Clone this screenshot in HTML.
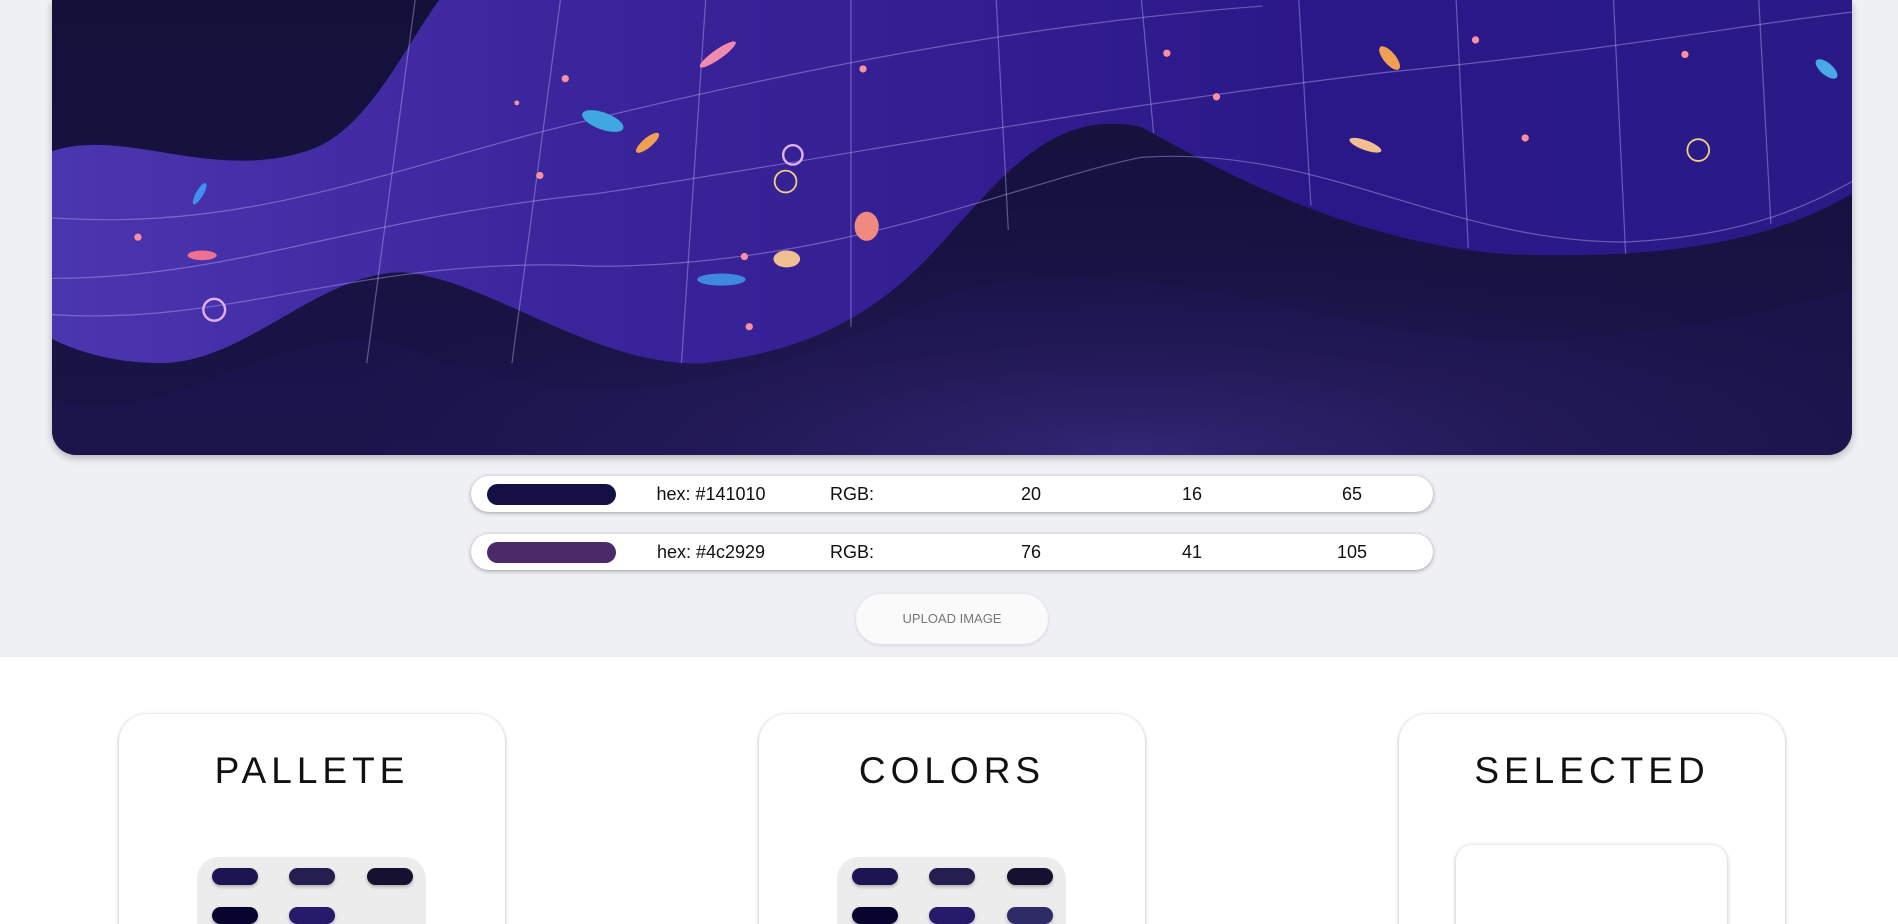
<!DOCTYPE html>
<html><head><meta charset="utf-8"><style>
*{margin:0;padding:0;box-sizing:border-box}
html,body{width:1898px;height:924px;overflow:hidden;background:#fff;font-family:"Liberation Sans",sans-serif}
#w{position:relative;width:1898px;height:924px;overflow:hidden}
.top{position:absolute;left:0;top:0;width:1898px;height:657px;background:#eff0f4}
.hero{position:absolute;left:52px;top:0;width:1800px;height:455px;border-radius:0 0 24px 24px;overflow:hidden;box-shadow:0 3px 8px rgba(0,0,0,.25)}
.row{position:absolute;left:471px;width:962px;height:36px;background:#fff;border-radius:18px;box-shadow:0 1px 4px rgba(0,0,0,.35)}
.row .sw{position:absolute;left:16px;top:8px;width:129px;height:21px;border-radius:11px}
.row span{position:absolute;top:8px;font-size:18px;color:#111;transform:translateX(-50%);white-space:nowrap}
.btn{position:absolute;left:856px;top:594px;width:192px;height:50px;border-radius:25px;background:#fafafa;box-shadow:0 1px 4px rgba(0,0,0,.12);font-size:13px;color:#777;text-align:center;line-height:50px}
.card{position:absolute;top:714px;width:386px;height:260px;border-radius:28px 28px 0 0;background:#fff;box-shadow:0 1px 4px rgba(0,0,0,.3)}
.card h2{position:absolute;top:36px;width:100%;text-align:center;font-weight:normal;font-size:37px;letter-spacing:5px;color:#111}
.grid{position:absolute;left:78px;top:143px;width:229px;height:120px;background:#ececec;border-radius:22px 22px 0 0}
.d{position:absolute;width:46px;height:17px;border-radius:9px;box-shadow:0 2px 3px rgba(0,0,0,.25)}
.sel{position:absolute;left:57px;top:131px;width:271px;height:130px;border-radius:16px 16px 0 0;background:#fff;box-shadow:0 1px 4px rgba(0,0,0,.3)}
</style></head><body><div id="w">
<div class="top"></div>
<div class="hero">
<svg width="1800" height="455" viewBox="0 0 1487 376" preserveAspectRatio="none">
<defs>
<linearGradient id="bg" x1="0" y1="0" x2="0" y2="1"><stop offset="0" stop-color="#13113a"/><stop offset="1" stop-color="#1a1448"/></linearGradient>
<radialGradient id="glow" cx="0.6" cy="1" r="0.5"><stop offset="0" stop-color="#3a2a80" stop-opacity=".8"/><stop offset="1" stop-color="#1a1448" stop-opacity="0"/></radialGradient>
<linearGradient id="band" x1="0" y1="0" x2="1" y2="0"><stop offset="0" stop-color="#4b36b0"/><stop offset=".3" stop-color="#3a249a"/><stop offset=".7" stop-color="#2b1888"/><stop offset="1" stop-color="#2a1a88"/></linearGradient>
</defs>
<rect width="1487" height="376" fill="url(#bg)"/>
<path d="M0 330 C100 360 200 250 300 290 C420 340 560 330 700 260 C820 200 950 240 1100 270 C1250 300 1400 260 1487 240 L1487 376 L0 376Z" fill="#1c1650" opacity=".6"/>
<rect width="1487" height="376" fill="url(#glow)"/>
<path d="M0 125 C60 105 130 150 210 125 C260 110 290 40 320 0 L1487 0 L1487 160 C1420 200 1330 215 1200 210 C1080 200 980 150 900 105 C830 90 790 140 740 195 C680 265 620 290 540 300 C450 305 360 230 290 225 C220 225 160 300 90 300 C50 300 20 290 0 280Z" fill="url(#band)"/>
<g fill="none" stroke="#b9a8f0" stroke-opacity=".45" stroke-width="1">
<path d="M0 180 C150 190 250 150 400 110 C600 60 800 20 1000 5"/>
<path d="M0 230 C150 230 250 180 450 160 C650 130 850 90 1100 60 C1300 40 1400 20 1487 10"/>
<path d="M0 260 C150 270 260 210 450 220 C650 220 800 150 900 130 C1050 120 1150 200 1300 200 C1400 195 1450 170 1487 150"/>
<path d="M300 0 L260 300 M420 0 L380 300 M540 0 L520 300 M660 0 L660 270 M780 0 L790 190 M900 0 L910 110 M1030 0 L1040 170 M1160 0 L1170 205 M1290 0 L1300 210 M1410 0 L1420 185"/>
</g>
<g>
<ellipse cx="550" cy="45" rx="18" ry="4" fill="#f08ab0" transform="rotate(-35 550 45)"/>
<ellipse cx="455" cy="100" rx="18" ry="7" fill="#3fa8e0" transform="rotate(20 455 100)"/>
<ellipse cx="492" cy="118" rx="12" ry="4" fill="#f0a050" transform="rotate(-40 492 118)"/>
<ellipse cx="1105" cy="48" rx="12" ry="5" fill="#f0a050" transform="rotate(50 1105 48)"/>
<ellipse cx="1466" cy="57" rx="11" ry="5" fill="#4aa8e8" transform="rotate(40 1466 57)"/>
<ellipse cx="1085" cy="120" rx="14" ry="4" fill="#f0c090" transform="rotate(20 1085 120)"/>
<ellipse cx="673" cy="187" rx="10" ry="12" fill="#f08a80"/>
<ellipse cx="607" cy="214" rx="11" ry="7" fill="#f0c090"/>
<ellipse cx="553" cy="231" rx="20" ry="5" fill="#3f88e0"/>
<ellipse cx="124" cy="211" rx="12" ry="4" fill="#f07090"/>
<ellipse cx="122" cy="160" rx="3" ry="10" fill="#4090f0" transform="rotate(30 122 160)"/>
<circle cx="134" cy="256" r="9" fill="none" stroke="#e0b0f0" stroke-width="2"/>
<circle cx="612" cy="128" r="8" fill="none" stroke="#e0b0f0" stroke-width="2"/>
<circle cx="606" cy="150" r="9" fill="none" stroke="#f0d080" stroke-width="1.5"/>
<circle cx="1360" cy="124" r="9" fill="none" stroke="#f0d080" stroke-width="1.5"/>
<g fill="#f890a0"><circle cx="424" cy="65" r="3"/><circle cx="670" cy="57" r="3"/><circle cx="921" cy="44" r="3"/><circle cx="1349" cy="45" r="3"/><circle cx="1217" cy="114" r="3"/><circle cx="962" cy="80" r="3"/><circle cx="403" cy="145" r="3"/><circle cx="71" cy="196" r="3"/><circle cx="576" cy="270" r="3"/><circle cx="572" cy="212" r="3"/><circle cx="1176" cy="33" r="3"/><circle cx="384" cy="85" r="2"/></g>
</g>
</svg>
</div>
<div class="row" style="top:476px"><div class="sw" style="background:#141046"></div><span style="left:240px">hex: #141010</span><span style="left:381px">RGB:</span><span style="left:560px">20</span><span style="left:721px">16</span><span style="left:881px">65</span></div>
<div class="row" style="top:534px"><div class="sw" style="background:#4c2969"></div><span style="left:240px">hex: #4c2929</span><span style="left:381px">RGB:</span><span style="left:560px">76</span><span style="left:721px">41</span><span style="left:881px">105</span></div>
<div class="btn">UPLOAD IMAGE</div>
<div class="card" style="left:119px"><h2>PALLETE</h2><div class="grid">
<div class="d" style="left:15px;top:11px;background:#1c1650"></div><div class="d" style="left:92px;top:11px;background:#23204f"></div><div class="d" style="left:170px;top:11px;background:#141230"></div>
<div class="d" style="left:15px;top:50px;background:#070530"></div><div class="d" style="left:92px;top:50px;background:#261a6a"></div></div></div>
<div class="card" style="left:759px"><h2>COLORS</h2><div class="grid">
<div class="d" style="left:15px;top:11px;background:#1c1650"></div><div class="d" style="left:92px;top:11px;background:#23204f"></div><div class="d" style="left:170px;top:11px;background:#141230"></div>
<div class="d" style="left:15px;top:50px;background:#070530"></div><div class="d" style="left:92px;top:50px;background:#261a6a"></div><div class="d" style="left:170px;top:50px;background:#2e2b66"></div></div></div>
<div class="card" style="left:1399px"><h2>SELECTED</h2><div class="sel"></div></div>
</div></body></html>
